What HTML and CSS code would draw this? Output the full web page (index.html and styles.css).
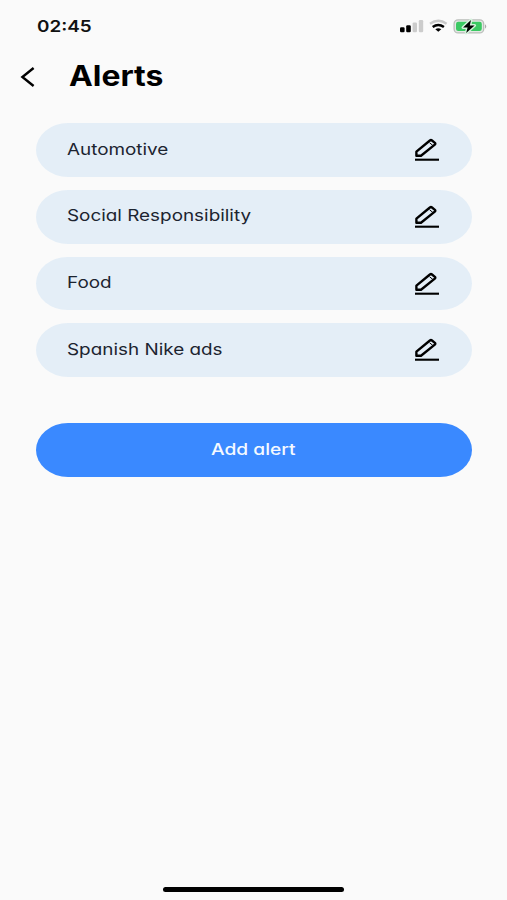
FILE: index.html
```
<!DOCTYPE html>
<html lang="en">
<head>
    <meta charset="UTF-8">
    <meta name="viewport" content="width=device-width, initial-scale=1.0">
    <title>Alerts</title>
    <link rel="stylesheet" href="styles.css">
</head>
<body>
    <!-- Shared icons -->
    <svg class="icon-defs" width="0" height="0">
        <symbol id="icon-edit" viewBox="0 0 26 24">
            <path d="M2.4 17.8V13.7L15.9 2.5Q17 1.7 18 2.5L20.9 4.9Q21.8 5.7 20.8 6.6L7 17.8Z" fill="none" stroke="currentColor" stroke-width="2.4" stroke-linejoin="round"/>
            <path d="M15.6 4.8L18.8 7.4" fill="none" stroke="currentColor" stroke-width="1"/>
            <path d="M1 21.7H25" stroke="currentColor" stroke-width="2.1"/>
        </symbol>
    </svg>

    <div class="status-bar">
        <span class="time">02:45</span>
        <svg class="status-icons" viewBox="0 0 90 20" width="90" height="20">
            <!-- Signal -->
            <rect x="2" y="12.2" width="4.6" height="5" rx="1.2" fill="#000"/>
            <rect x="8.2" y="10.2" width="4.6" height="7" rx="1.2" fill="#000"/>
            <rect x="14.6" y="7.4" width="4.4" height="9.8" rx="1.2" fill="#ccc"/>
            <rect x="20.8" y="5" width="4.4" height="12.2" rx="1.2" fill="#ccc"/>
            <!-- Wifi -->
            <path d="M32 8.8Q40.3 2.8 48.6 8.8" fill="none" stroke="#c8c8c8" stroke-width="2.3"/>
            <path d="M34.7 12Q40.3 8 45.9 12" fill="none" stroke="#000" stroke-width="2.5"/>
            <path d="M37.3 14.3Q40.3 12.3 43.3 14.3L40.3 16.8Z" fill="#000"/>
            <!-- Battery -->
            <rect x="56.1" y="4.9" width="29.6" height="13" rx="4" fill="#e4e8e4" stroke="#b9bdb9" stroke-width="1.3"/>
            <rect x="58" y="6.8" width="25.8" height="9.2" rx="2.2" fill="#3bc963"/>
            <path d="M87.2 9.3Q89.3 11.5 87.2 13.7Z" fill="#999"/>
            <path d="M73 5L65 12.5H69.6L68.2 18L76.6 10.5H71.8Z" fill="#000" stroke="#d5f3dd" stroke-width="3" stroke-linejoin="round" paint-order="stroke"/>
        </svg>
    </div>

    <header class="header">
        <svg class="back" viewBox="0 0 16 22" width="16" height="22">
            <path d="M13.6 2L2.4 11L13.6 20" fill="none" stroke="#000" stroke-width="2.4"/>
        </svg>
        <h1>Alerts</h1>
    </header>

    <main class="content">
        <div class="alert-list">
            <div class="alert">
                <span class="label">Automotive</span>
                <svg class="edit"><use href="#icon-edit"/></svg>
            </div>
            <div class="alert">
                <span class="label">Social Responsibility</span>
                <svg class="edit"><use href="#icon-edit"/></svg>
            </div>
            <div class="alert">
                <span class="label">Food</span>
                <svg class="edit"><use href="#icon-edit"/></svg>
            </div>
            <div class="alert">
                <span class="label">Spanish Nike ads</span>
                <svg class="edit"><use href="#icon-edit"/></svg>
            </div>
        </div>
        <button class="add-alert"><span>Add alert</span></button>
    </main>

    <div class="home-indicator"></div>
</body>
</html>
```
FILE: styles.css
```
* {
    box-sizing: border-box;
}

body {
    margin: 0;
    height: 900px;
    display: flex;
    flex-direction: column;
    background-color: #fafafa;
    color: #000;
    font-family: Inter, "Liberation Sans", sans-serif;
    font-feature-settings: "cv11";
    overflow: hidden;
}

.icon-defs {
    display: none;
}

.status-bar {
    display: flex;
    justify-content: space-between;
    align-items: center;
    height: 52px;
    padding: 0 19px 0 36.5px;
}

.time {
    margin-bottom: 1px;
    color: #111;
    font-size: 16px;
    font-weight: 600;
    transform: scaleX(1.18);
    transform-origin: left;
}

.status-icons {
    margin-top: -3px;
}

.header {
    display: flex;
    align-items: center;
    height: 50px;
    padding-left: 20px;
}

.header h1 {
    margin: 0 0 2px 33px;
    font-size: 28px;
    font-weight: 700;
    line-height: 36px;
    transform: scaleX(1.14);
    transform-origin: left;
}

.content {
    padding: 21.3px 35px 0 36px;
}

.alert-list {
    display: flex;
    flex-direction: column;
    gap: 13px;
}

.alert {
    display: flex;
    justify-content: space-between;
    align-items: center;
    height: 53.7px;
    padding: 0 32px 0 31px;
    border-radius: 32px / 27px;
    background-color: #e4eef7;
}

.label {
    color: #1c2430;
    font-size: 16px;
    line-height: 20px;
    margin-bottom: 3px;
    transform: scaleX(1.18);
    transform-origin: left;
}

.edit {
    width: 26px;
    height: 24px;
}

.add-alert {
    display: block;
    width: 100%;
    height: 54px;
    margin-top: 46px;
    padding: 0 2px 3px 0;
    border: none;
    border-radius: 32px / 27px;
    background-color: #3a89ff;
    color: #f4f9ff;
    font: 500 16px Inter, "Liberation Sans", sans-serif;
    font-feature-settings: inherit;
}

.add-alert span {
    display: inline-block;
    transform: scaleX(1.2);
}

.home-indicator {
    width: 181px;
    height: 5px;
    margin: auto auto 8px 163px;
    border-radius: 3px;
    background-color: #000;
}
```
